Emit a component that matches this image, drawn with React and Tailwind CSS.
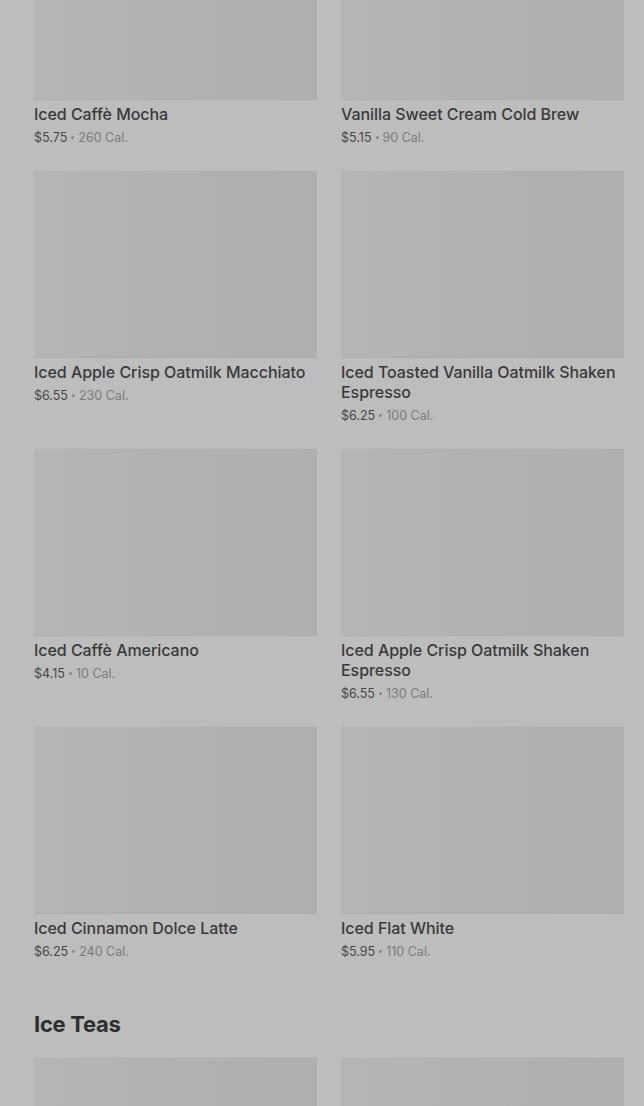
const rows = [
  [
    { name: "Iced Caffè Mocha", price: "$5.75", cal: "260 Cal." },
    { name: "Vanilla Sweet Cream Cold Brew", price: "$5.15", cal: "90 Cal." },
  ],
  [
    { name: "Iced Apple Crisp Oatmilk Macchiato", price: "$6.55", cal: "230 Cal." },
    { name: "Iced Toasted Vanilla Oatmilk Shaken Espresso", price: "$6.25", cal: "100 Cal." },
  ],
  [
    { name: "Iced Caffè Americano", price: "$4.15", cal: "10 Cal." },
    { name: "Iced Apple Crisp Oatmilk Shaken Espresso", price: "$6.55", cal: "130 Cal." },
  ],
  [
    { name: "Iced Cinnamon Dolce Latte", price: "$6.25", cal: "240 Cal." },
    { name: "Iced Flat White", price: "$5.95", cal: "110 Cal." },
  ],
];

function ProductCard({ item }) {
  return (
    <div className="flex flex-col">
      {/* placeholder image */}
      <div className="h-[188px] bg-gradient-to-r from-[#b5b5b5] via-[#b1b1b1] to-[#afafaf] border-t border-[#b9b9b9] border-b border-b-[#acacac]" />
      <p className="mt-[4px] text-[16px] leading-[20px] font-medium text-[#3a3a3a] tracking-[-0.05px]">
        {item.name}
      </p>
      <p className="mt-[5px] text-[12.5px] leading-[17px] text-[#474747] flex items-center">
        <span>{item.price}</span>
        <span className="mx-[4px] w-[3px] h-[3px] rounded-full bg-[#858585]" />
        <span className="text-[#7c7c7c]">{item.cal}</span>
      </p>
    </div>
  );
}

export default function App() {
  return (
    <div
      className="min-h-screen bg-[#bdbdbd] overflow-hidden"
      style={{ fontFamily: "Inter, 'Liberation Sans', sans-serif" }}
    >
      <div className="pl-[34px] pr-[20px] -mt-[88px]">
        <div className="flex flex-col gap-[24px]">
          {rows.map((row, i) => (
            <div key={i} className="grid grid-cols-2 gap-x-[24px]">
              {row.map((item) => (
                <ProductCard key={item.name} item={item} />
              ))}
            </div>
          ))}
        </div>

        <h2 className="mt-[50px] text-[22px] leading-[28px] font-bold text-[#2e2e2e] tracking-[-0.3px]">
          Ice Teas
        </h2>

        <div className="mt-[19px] grid grid-cols-2 gap-x-[24px]">
          <div className="h-[188px] bg-gradient-to-r from-[#b5b5b5] via-[#b1b1b1] to-[#afafaf] border-t border-[#b9b9b9]" />
          <div className="h-[188px] bg-gradient-to-r from-[#b5b5b5] via-[#b1b1b1] to-[#afafaf] border-t border-[#b9b9b9]" />
        </div>
      </div>
    </div>
  );
}
